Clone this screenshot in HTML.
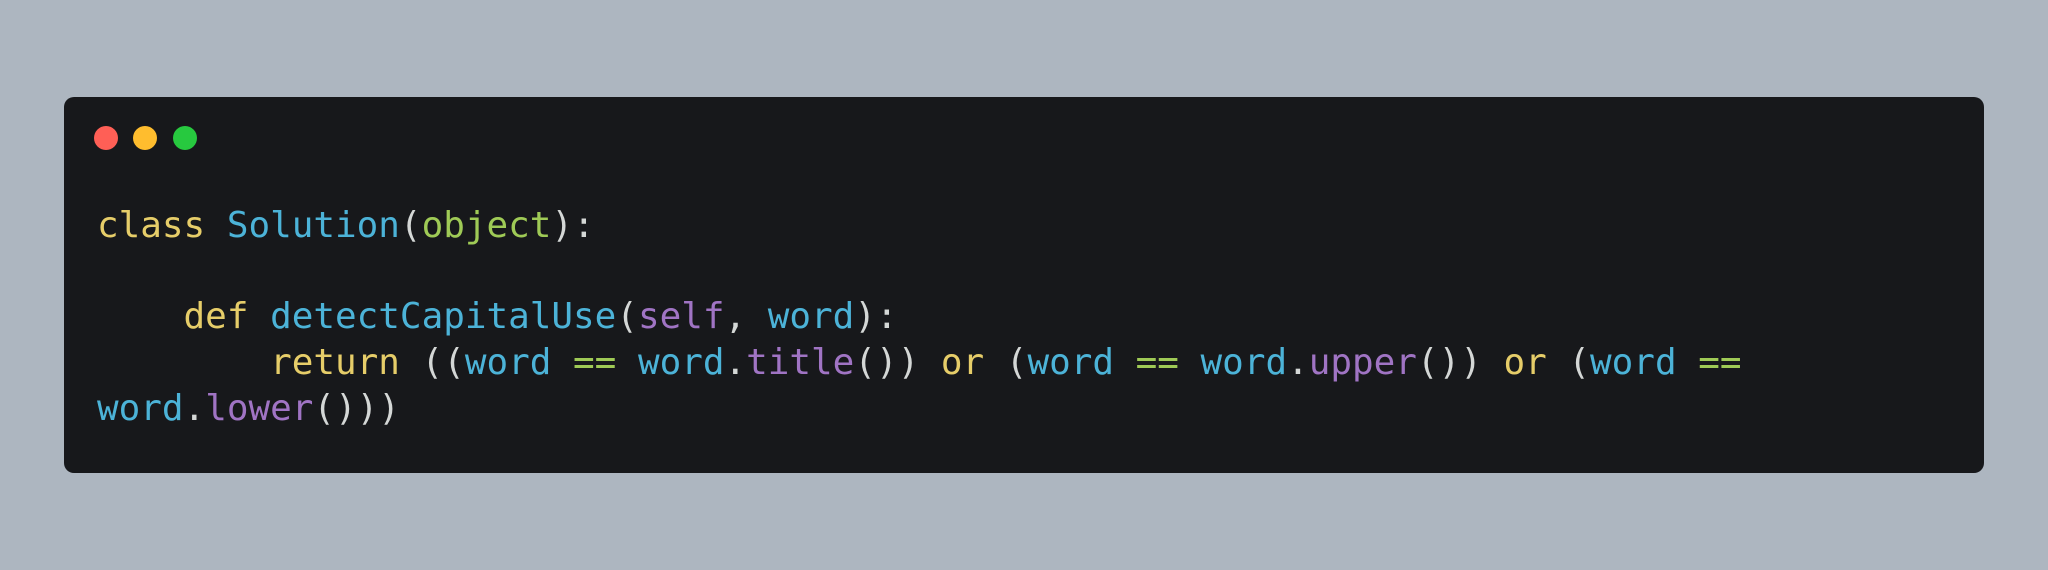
<!DOCTYPE html>
<html><head><style>
html,body{margin:0;padding:0}
body{width:2048px;height:570px;background:#adb6c0;position:relative;overflow:hidden}
.card{position:absolute;left:64px;top:97px;width:1920px;height:376px;background:#17181b;border-radius:10px}
.dot{position:absolute;top:126px;width:24px;height:24px;border-radius:50%}
pre{position:absolute;left:97px;top:203px;margin:0;font-family:"DejaVu Sans Mono","Liberation Mono",monospace;font-size:35.95px;line-height:45.7px;color:#d4d7d6}
.y{color:#e6cd69}.b{color:#4cb3d8}.g{color:#9fca56}.p{color:#a074c4}
</style></head><body>
<div class="card"></div>
<div class="dot" style="left:94px;background:#ff5f56"></div>
<div class="dot" style="left:133px;background:#ffbd2e"></div>
<div class="dot" style="left:173px;background:#27c93f"></div>
<pre><span class="y">class</span> <span class="b">Solution</span>(<span class="g">object</span>):

    <span class="y">def</span> <span class="b">detectCapitalUse</span>(<span class="p">self</span>, <span class="b">word</span>):
        <span class="y">return</span> ((<span class="b">word</span> <span class="g">==</span> <span class="b">word</span>.<span class="p">title</span>()) <span class="y">or</span> (<span class="b">word</span> <span class="g">==</span> <span class="b">word</span>.<span class="p">upper</span>()) <span class="y">or</span> (<span class="b">word</span> <span class="g">==</span>
<span class="b">word</span>.<span class="p">lower</span>()))</pre>
</body></html>
